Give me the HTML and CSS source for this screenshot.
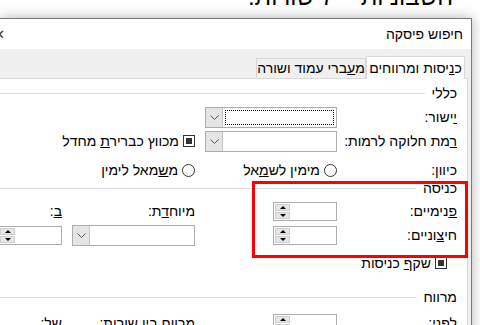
FILE: index.html
```html
<!DOCTYPE html>
<html>
<head>
	<meta charset="utf-8">
	<title>חיפוש פיסקה</title>
	<link rel="stylesheet" href="styles.css">
</head>
<body>
<div class="note">חשבוניות – 7 שורות.</div>
<div class="dialog">
	<div class="titlebar">
		<span class="title">חיפוש פיסקה</span>
		<span class="close">✕</span>
	</div>
	<div class="tabs">
		<div class="tab active">כ<u>נ</u>יסות ומרווחים</div>
		<div class="tab">מ<u>ע</u>ברי עמוד ושורה</div>
	</div>
	<div class="panel">
		<div class="group">כללי</div>
		<div class="row first">
			<span><u>י</u>ישור:</span>
			<div class="combo"><div class="field"><div class="focus"></div></div><div class="drop"><svg width="9" height="5" viewBox="0 0 9 5"><path d="M0.5 0.5 L4.5 4.5 L8.5 0.5" fill="none" stroke="#555" stroke-width="1"/></svg></div></div>
		</div>
		<div class="row">
			<span><u>ר</u>מת חלוקה לרמות:</span>
			<div class="combo"><div class="field"></div><div class="drop"><svg width="9" height="5" viewBox="0 0 9 5"><path d="M0.5 0.5 L4.5 4.5 L8.5 0.5" fill="none" stroke="#555" stroke-width="1"/></svg></div></div>
			<label class="opt"><span class="check"><i></i></span><span>מכווץ כבריר<u>ת</u> מחדל</span></label>
		</div>
		<div class="row dir">
			<span>כיוון:</span>
			<label class="opt"><span class="radio"></span><span>מימין לש<u>מ</u>אל</span></label>
			<label class="opt"><span class="radio"></span><span>מ<u>ש</u>מאל לימין</span></label>
		</div>
		<div class="group indent">כניסה</div>
		<div class="row inner">
			<span><u>פ</u>נימיים:</span>
			<div class="spin"><div class="field"></div><div class="arrows"><b class="up"></b><b class="down"></b></div></div>
			<span>מיוח<u>ד</u>ת:</span>
			<span><u>ב</u>:</span>
		</div>
		<div class="row">
			<span>חי<u>צ</u>וניים:</span>
			<div class="spin"><div class="field"></div><div class="arrows"><b class="up"></b><b class="down"></b></div></div>
			<div class="combo"><div class="field"></div><div class="drop"><svg width="9" height="5" viewBox="0 0 9 5"><path d="M0.5 0.5 L4.5 4.5 L8.5 0.5" fill="none" stroke="#555" stroke-width="1"/></svg></div></div>
			<div class="spin"><div class="field"></div><div class="arrows"><b class="up"></b><b class="down"></b></div></div>
		</div>
		<div class="mirror">
			<label class="opt"><span class="check"><i></i></span><span>שק<u>ף</u> כניסות</span></label>
		</div>
		<div class="group spacing">מרווח</div>
		<div class="row last">
			<span>לפני:</span>
			<div class="spin"><div class="field"></div><div class="arrows"><b class="up"></b><b class="down"></b></div></div>
			<span>מרווח בין שורות:</span>
			<span>של:</span>
		</div>
	</div>
</div>
<div class="mark"></div>
</body>
</html>
```

FILE: styles.css
```css
*{
	margin:0;
	padding:0;
	box-sizing:border-box;
}
body{
	background:#fff;
	overflow:hidden;
	height:325px;
	font-family:"Liberation Sans","DejaVu Sans",sans-serif;
	color:#000;
}
.note{
	direction:rtl;
	font-size:24px;
	line-height:30px;
	margin-top:-18px;
	padding-right:27px;
	white-space:nowrap;
}
.dialog{
	direction:rtl;
	width:472px;
	height:330px;
	margin-top:6px;
	border-top:1px solid #7a7a7a;
	border-right:1px solid #7a7a7a;
	background:#f0f0f0;
	box-shadow:0 0 12px rgba(0,0,0,0.3);
	font-size:14px;
}
.titlebar{
	height:30px;
	background:#fff;
	display:flex;
	align-items:center;
	justify-content:space-between;
	padding-right:8px;
}
.close{
	font-size:13px;
	margin-left:-6px;
	color:#222;
}
.tabs{
	height:29px;
	display:flex;
	align-items:flex-end;
	padding-right:6px;
}
.tab{
	height:20px;
	line-height:18px;
	border:1px solid #d9d9d9;
	border-bottom:none;
	background:#f0f0f0;
	text-align:center;
	width:110px;
}
.tab.active{
	width:99px;
	height:23px;
	line-height:22px;
	background:#fff;
	margin-bottom:-1px;
	position:relative;
	z-index:1;
}
.panel{
	background:#fff;
	border-top:1px solid #d9d9d9;
	border-right:1px solid #d9d9d9;
	margin-right:3px;
	padding-right:10px;
	height:260px;
}
.group{
	display:flex;
	align-items:center;
	gap:7px;
	height:18px;
	margin-top:5px;
}
.group::after{
	content:"";
	flex:1;
	border-top:1px solid #dcdcdc;
}
.group.indent{
	margin-top:0;
}
.group.spacing{
	margin-top:15px;
}
.row{
	display:grid;
	grid-template-columns:110px 132px 123px 1fr;
	column-gap:10px;
	align-items:center;
	height:24px;
	white-space:nowrap;
}
.row.first{
	margin-top:3px;
}
.row.dir{
	height:18px;
	margin-top:8px;
}
.row.inner{
	margin-top:2px;
}
.row.last{
	margin-top:5px;
}
.opt{
	display:flex;
	align-items:center;
	gap:4px;
}
.check{
	flex:none;
	width:12px;
	height:12px;
	border:1px solid #333;
	padding:2px;
	display:flex;
}
.check i{
	flex:1;
	background:#333;
}
.radio{
	flex:none;
	width:13px;
	height:13px;
	border:1px solid #333;
	border-radius:50%;
}
.combo{
	height:21px;
	border:1px solid #adadad;
	display:flex;
	background:#fff;
}
.combo .field{
	flex:1;
	padding:2px;
}
.focus{
	height:100%;
	border:1px dotted #000;
}
.drop{
	width:17px;
	background:#e5e5e5;
	border-right:1px solid #c9c9c9;
	display:flex;
	align-items:center;
	justify-content:center;
}
.spin{
	width:64px;
	height:19px;
	border:1px solid #adadad;
	display:flex;
	background:#fff;
}
.spin .field{
	flex:1;
}
.arrows{
	width:15px;
	display:flex;
	flex-direction:column;
	gap:1px;
	margin:1px;
}
.arrows b{
	flex:1;
	background:#e6e6e6;
	border:1px solid #cfcfcf;
	display:flex;
	align-items:center;
	justify-content:center;
}
.arrows b::after{
	content:"";
	border-left:3px solid transparent;
	border-right:3px solid transparent;
}
.arrows .up::after{
	border-bottom:3px solid #000;
}
.arrows .down::after{
	border-top:3px solid #000;
}
.mirror{
	height:20px;
	margin-top:6px;
	display:flex;
	align-items:center;
	padding-right:10px;
}
.mark{
	position:absolute;
	left:252px;
	top:181px;
	width:216px;
	height:77px;
	border:3px solid #f00;
}
```
